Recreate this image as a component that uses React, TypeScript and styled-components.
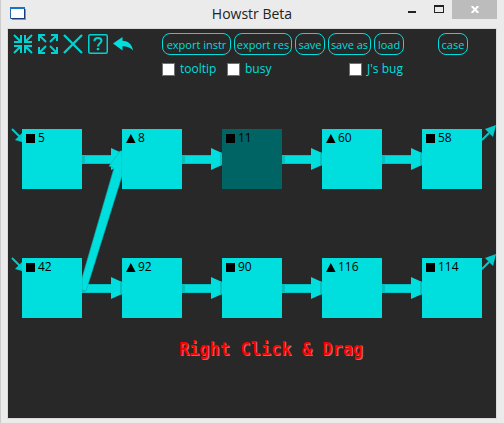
import React from "react";
import styled, { createGlobalStyle } from "styled-components";

const CYAN = "#00dede";
const SANS = '"Open Sans", "Noto Sans", sans-serif';

const GlobalStyle = createGlobalStyle`
  * { box-sizing: border-box; }
  body { margin: 0; background: #ebebeb; font-family: ${SANS}; }
`;

const Window = styled.div`
  display: flex;
  flex-direction: column;
  min-height: 100vh;
  padding: 0 7px 4px 6px;
  background: #ebebeb;
  border-left: 1px solid #cccccc;
`;

const TitleBar = styled.header`
  display: grid;
  grid-template-columns: 1fr auto 1fr;
  height: 28px;
`;

const AppIcon = styled.svg`
  margin: 7px 0 0 3px;
`;

const Title = styled.h1`
  margin: 0;
  font-size: 14px;
  line-height: 27px;
  font-weight: 400;
  color: #222222;
`;

const WindowControls = styled.div`
  display: flex;
  justify-content: flex-end;
  align-items: flex-start;
`;

const WindowButton = styled.button<{ $close?: boolean }>`
  display: flex;
  align-items: center;
  justify-content: center;
  width: ${(p) => (p.$close ? 45 : 27)}px;
  height: 19px;
  padding: 0;
  border: 0;
  background: ${(p) => (p.$close ? "#bcbcbc" : "transparent")};
`;

const Canvas = styled.main`
  flex: 1;
  background: #282828;
  border: 1px solid #dadada;
`;

const Toolbar = styled.div`
  display: flex;
  align-items: flex-start;
  gap: 29px;
  height: 56px;
  padding: 4px 5px 0;
`;

const IconRow = styled.div`
  display: flex;
  gap: 5px;
  padding-top: 1px;
`;

const IconButton = styled.button`
  display: block;
  width: 20px;
  height: 20px;
  padding: 0;
  border: 0;
  background: none;
  svg { display: block; }
`;

const Commands = styled.div`
  display: flex;
  flex-direction: column;
  gap: 5px;
`;

const Row = styled.div`
  display: flex;
  gap: 3px;
`;

const PillButton = styled.button<{ $width: number; $apart?: boolean }>`
  width: ${(p) => p.$width}px;
  height: 22px;
  margin-left: ${(p) => (p.$apart ? 31 : 0)}px;
  padding: 0;
  border: 1px solid ${CYAN};
  border-radius: 8px;
  background: transparent;
  color: ${CYAN};
  font: 11px/22px ${SANS};
  white-space: nowrap;
  display: flex;
  justify-content: center;
`;

const CheckLabel = styled.label<{ $width: number }>`
  display: flex;
  align-items: center;
  gap: 5px;
  width: ${(p) => p.$width}px;
  color: ${CYAN};
  font-size: 12px;
  line-height: 18px;
  white-space: nowrap;
`;

const Check = styled.input`
  appearance: none;
  width: 13px;
  height: 13px;
  margin: 0;
  border: 1px solid #707070;
  background: #ffffff;
  &:checked { background: ${CYAN}; }
`;

const Graph = styled.div`
  position: relative;
  height: 250px;
  overflow: hidden;
`;

const Edges = styled.svg`
  display: block;
`;

const NodeBox = styled.div<{ $x: number; $y: number; $dim?: boolean }>`
  position: absolute;
  left: ${(p) => p.$x}px;
  top: ${(p) => p.$y}px;
  display: flex;
  align-items: flex-start;
  gap: 2px;
  width: 60px;
  height: 60px;
  padding: 0 4px;
  background: ${(p) => (p.$dim ? "#006464" : CYAN)};
  color: #000000;
  font-size: 12px;
  line-height: 18px;
  svg { margin-top: 5px; }
`;

const Caption = styled.p`
  margin: 0;
  padding-left: 38px;
  text-align: center;
  color: #ff0000;
  font: bold 17px/28px "DejaVu Sans Mono", monospace;
  text-shadow: 1px 1px 0 #9c7474;
`;

const icons = [
  {
    label: "Collapse",
    art: (
      <g fill="none" stroke="#00d2d2" strokeWidth="2">
        <path d="M1 1l7 7M8 1v7H1M19 1l-7 7M12 1v7h7M1 19l7-7M8 19v-7H1M19 19l-7-7M12 19v-7h7" />
      </g>
    ),
  },
  {
    label: "Expand",
    art: (
      <g fill="none" stroke="#00d2d2" strokeWidth="2">
        <path d="M1 1l7 7M1 7V1h6M19 1l-7 7M13 1h6v6M1 19l7-7M1 13v6h6M19 19l-7-7M19 13v6h-6" />
      </g>
    ),
  },
  {
    label: "Delete",
    art: <path d="M1 1l18 18M19 1L1 19" fill="none" stroke="#00d2d2" strokeWidth="2.4" />,
  },
  {
    label: "Help",
    art: (
      <g fill="none" stroke="#00d2d2">
        <rect x="0.75" y="0.75" width="18.5" height="18.5" rx="1.5" strokeWidth="1.5" />
        <path d="M6.5 7.2V6.5C6.5 4.8 8 4 10 4s3.5 1 3.5 2.8c0 2.4-3.5 2.6-3.5 5.7" strokeWidth="2" />
        <path d="M10 14v2.2" strokeWidth="2.4" />
      </g>
    ),
  },
  {
    label: "Undo",
    art: (
      <path d="M0 9.5L9.5 3v3.8c5.8.2 9.6 3.8 10.5 9.7-2.8-3.1-5.8-4.2-10.5-4.2v4.2z" fill={CYAN} />
    ),
  },
];

type NodeData = { id: number; kind: "square" | "triangle"; dim?: boolean };

const rows: { y: number; nodes: NodeData[] }[] = [
  {
    y: 44,
    nodes: [
      { id: 5, kind: "square" },
      { id: 8, kind: "triangle" },
      { id: 11, kind: "square", dim: true },
      { id: 60, kind: "triangle" },
      { id: 58, kind: "square" },
    ],
  },
  {
    y: 173,
    nodes: [
      { id: 42, kind: "square" },
      { id: 92, kind: "triangle" },
      { id: 90, kind: "square" },
      { id: 116, kind: "triangle" },
      { id: 114, kind: "square" },
    ],
  },
];

function RowEdges({ y }: { y: number }) {
  return (
    <g transform={`translate(0 ${y})`}>
      {[74, 174, 274, 374].map((x) => (
        <g key={x}>
          <path d={`M${x} 26h30v9h-30z`} fill="#00c4c4" />
          <path d={`M${x} 27h30v7h-30z`} fill={CYAN} />
          <path d={`M${x} 26h3v9h-3z`} fill="#08c0c0" />
          <path d={`M${x + 29} 19l11 5v12l-11 5z`} fill={CYAN} />
          <path d={`M${x + 38} 23l2 1v12l-2 1z`} fill="#08c0c0" />
        </g>
      ))}
      <path d="M4 0l8 8" stroke="#00cccc" strokeWidth="2" />
      <path d="M14 4v9l-7-2z" fill="#00cccc" />
      <path d="M474 11l7-7" stroke="#00cccc" strokeWidth="2" />
      <path d="M488-4l-11 4 8 8z" fill="#00cccc" />
    </g>
  );
}

export default function App() {
  return (
    <>
      <GlobalStyle />
      <Window>
        <TitleBar>
          <AppIcon width="17" height="14" viewBox="0 0 17 14" aria-hidden="true">
            <path d="M2 2h14v11H2z" fill="#8d95a5" />
            <path d="M.5.5h14v11H.5z" fill="#ffffff" stroke="#2c62b0" />
            <path d="M0 0h15v2H0z" fill="#1674d1" />
            <path d="M14 2h1v10H1v-1h13z" fill="#183d75" />
          </AppIcon>
          <Title>Howstr Beta</Title>
          <WindowControls>
            <WindowButton aria-label="Minimize">
              <svg width="8" height="9" viewBox="0 0 8 9"><path d="M0 6h8v2H0z" fill="#222222" /></svg>
            </WindowButton>
            <WindowButton aria-label="Maximize">
              <svg width="10" height="9" viewBox="0 0 10 9">
                <path d="M0 0h10v8H0zM1 2v5h8V2z" fill="#222222" fillRule="evenodd" />
              </svg>
            </WindowButton>
            <WindowButton $close aria-label="Close">
              <svg width="8" height="7" viewBox="0 0 8 7">
                <path d="M.7 0l6.6 7M7.3 0L.7 7" stroke="#ffffff" strokeWidth="2" />
              </svg>
            </WindowButton>
          </WindowControls>
        </TitleBar>
        <Canvas>
          <Toolbar>
            <IconRow>
              {icons.map((icon) => (
                <IconButton key={icon.label} aria-label={icon.label}>
                  <svg width="20" height="20" viewBox="0 0 20 20">{icon.art}</svg>
                </IconButton>
              ))}
            </IconRow>
            <Commands>
              <Row>
                <PillButton $width={69}>export instr</PillButton>
                <PillButton $width={58}>export res</PillButton>
                <PillButton $width={30}>save</PillButton>
                <PillButton $width={43}>save as</PillButton>
                <PillButton $width={30}>load</PillButton>
                <PillButton $width={30} $apart>case</PillButton>
              </Row>
              <Row>
                <CheckLabel $width={62}><Check type="checkbox" />tooltip</CheckLabel>
                <CheckLabel $width={119}><Check type="checkbox" />busy</CheckLabel>
                <CheckLabel $width={62}><Check type="checkbox" />J's bug</CheckLabel>
              </Row>
            </Commands>
          </Toolbar>
          <Graph>
            <Edges width="488" height="250" viewBox="0 0 488 250" aria-hidden="true">
              {rows.map((row) => <RowEdges key={row.y} y={row.y} />)}
              <path
                d="M74 193L106 83l-5-2 11-15h2v25L78 206l-4-1z"
                fill={CYAN}
                stroke="#00b0b0"
                strokeWidth="0.6"
              />
            </Edges>
            {rows.map((row) =>
              row.nodes.map((node, i) => (
                <NodeBox key={node.id} $x={14 + i * 100} $y={row.y} $dim={node.dim}>
                  <svg width="10" height="9" viewBox="0 0 10 9" aria-hidden="true">
                    <path d={node.kind === "square" ? "M0 0h9v9H0z" : "M0 9L4.8 0 9.6 9z"} />
                  </svg>
                  {node.id}
                </NodeBox>
              ))
            )}
          </Graph>
          <Caption>Right Click &amp; Drag</Caption>
        </Canvas>
      </Window>
    </>
  );
}
